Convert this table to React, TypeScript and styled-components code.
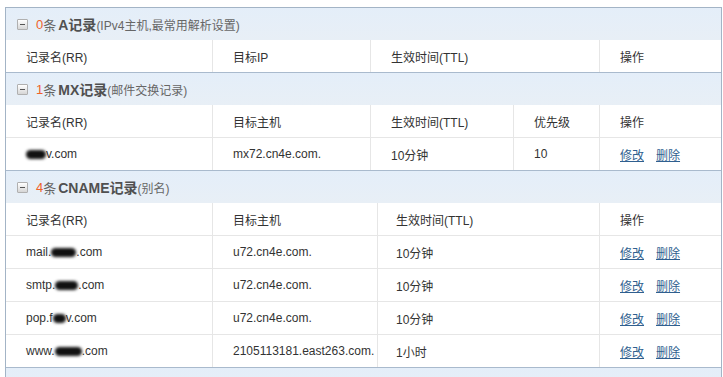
import React from 'react';
import styled, { createGlobalStyle } from 'styled-components';

const GlobalStyle = createGlobalStyle`
  html, body {
    margin: 0;
    padding: 0;
    background: #ffffff;
    overflow: hidden;
  }
  body {
    font-family: 'Liberation Sans', Arial, 'Noto Sans CJK SC', sans-serif;
    font-size: 12px;
    color: #333333;
  }
`;

// Record list panel
const Panel = styled.div`
  margin: 7px 0 0 5px;
  width: 715px;
  border: 1px solid #a3b4c6;
  border-bottom: none;
`;

const Section = styled.section`
  border-bottom: 1px solid #a9bacd;
`;

const SectionHead = styled.div`
  display: flex;
  align-items: center;
  height: 32px;
  padding-left: 11px;
  background: linear-gradient(#e4eef9, #e8eff6);
  color: #666666;
`;

const ToggleBox = styled.span`
  position: relative;
  box-sizing: border-box;
  width: 11px;
  height: 11px;
  margin-right: 8px;
  border: 1px solid #b0b0b0;
  border-radius: 1px;
  background: linear-gradient(#ffffff, #d6d6d6);

  &::after {
    content: '';
    position: absolute;
    left: 2px;
    right: 2px;
    top: 4px;
    height: 1px;
    background: #555555;
  }
`;

const Count = styled.span`
  color: #f0622a;
  font-size: 13px;
`;

const Unit = styled.span`
  font-size: 13px;
  color: #666666;
`;

const TypeName = styled.strong`
  font-size: 14px;
  color: #505050;
  margin-left: 2px;
`;

const Note = styled.span`
  font-size: 12px;
  color: #666666;
`;

const Row = styled.div<{ $cols: string; $last?: boolean }>`
  display: grid;
  grid-template-columns: ${(p) => p.$cols};
  height: 32px;
  border-bottom: ${(p) => (p.$last ? 'none' : '1px solid #e6e6e6')};
  background: #ffffff;
`;

const Cell = styled.div<{ $pad?: number }>`
  display: flex;
  align-items: center;
  padding-left: ${(p) => p.$pad ?? 20}px;
  border-right: 1px solid #e6e6e6;
  white-space: nowrap;
  overflow: hidden;
  color: #333333;

  &:last-child {
    border-right: none;
  }
`;

const Redacted = styled.span<{ $w: number }>`
  display: inline-block;
  width: ${(p) => p.$w}px;
  height: 9px;
  border-radius: 6px;
  background: #111111;
  filter: blur(1.6px);
  vertical-align: middle;
`;

const Actions = styled.div`
  display: flex;
  gap: 12px;
`;

const ActionLink = styled.a`
  color: #2f5f8f;
  text-decoration: underline;
  cursor: pointer;
`;

const COLS_A = '207px 158px 229px 1fr';
const COLS_MX = '207px 158px 143px 86px 1fr';
const COLS_CNAME = '207px 165px 222px 1fr';

const Head: React.FC<{ count: number; type: string; note: string }> = ({ count, type, note }) => (
  <SectionHead>
    <ToggleBox />
    <Count>{count}</Count>
    <Unit>条</Unit>
    <TypeName>{type}</TypeName>
    <Note>{note}</Note>
  </SectionHead>
);

const Ops = () => (
  <Actions>
    <ActionLink>修改</ActionLink>
    <ActionLink>删除</ActionLink>
  </Actions>
);

const Host: React.FC<{ pre: string; blur: number; post: string }> = ({ pre, blur, post }) => (
  <span>
    {pre}
    <Redacted $w={blur} />
    {post}
  </span>
);

const cnameRows = [
  { pre: 'mail.', blur: 25, post: '.com', target: 'u72.cn4e.com.', ttl: '10分钟' },
  { pre: 'smtp.', blur: 23, post: '.com', target: 'u72.cn4e.com.', ttl: '10分钟' },
  { pre: 'pop.f', blur: 13, post: 'v.com', target: 'u72.cn4e.com.', ttl: '10分钟' },
  { pre: 'www.', blur: 27, post: '.com', target: '2105113181.east263.com.', ttl: '1小时' },
];

export default function App() {
  return (
    <>
      <GlobalStyle />
      <Panel>
        <Section>
          <Head count={0} type="A记录" note="(IPv4主机,最常用解析设置)" />
          <Row $cols={COLS_A} $last>
            <Cell>记录名(RR)</Cell>
            <Cell>目标IP</Cell>
            <Cell>生效时间(TTL)</Cell>
            <Cell>操作</Cell>
          </Row>
        </Section>

        <Section>
          <Head count={1} type="MX记录" note="(邮件交换记录)" />
          <Row $cols={COLS_MX}>
            <Cell>记录名(RR)</Cell>
            <Cell>目标主机</Cell>
            <Cell>生效时间(TTL)</Cell>
            <Cell>优先级</Cell>
            <Cell>操作</Cell>
          </Row>
          <Row $cols={COLS_MX} $last>
            <Cell>
              <Host pre="" blur={20} post="v.com" />
            </Cell>
            <Cell>mx72.cn4e.com.</Cell>
            <Cell>10分钟</Cell>
            <Cell>10</Cell>
            <Cell>
              <Ops />
            </Cell>
          </Row>
        </Section>

        <Section>
          <Head count={4} type="CNAME记录" note="(别名)" />
          <Row $cols={COLS_CNAME}>
            <Cell>记录名(RR)</Cell>
            <Cell>目标主机</Cell>
            <Cell $pad={18}>生效时间(TTL)</Cell>
            <Cell>操作</Cell>
          </Row>
          {cnameRows.map((r, i) => (
            <Row key={r.pre} $cols={COLS_CNAME} $last={i === cnameRows.length - 1}>
              <Cell>
                <Host pre={r.pre} blur={r.blur} post={r.post} />
              </Cell>
              <Cell>{r.target}</Cell>
              <Cell $pad={18}>{r.ttl}</Cell>
              <Cell>
                <Ops />
              </Cell>
            </Row>
          ))}
        </Section>

        {/* next group's header strip, continues below the fold */}
        <SectionHead />
      </Panel>
    </>
  );
}
